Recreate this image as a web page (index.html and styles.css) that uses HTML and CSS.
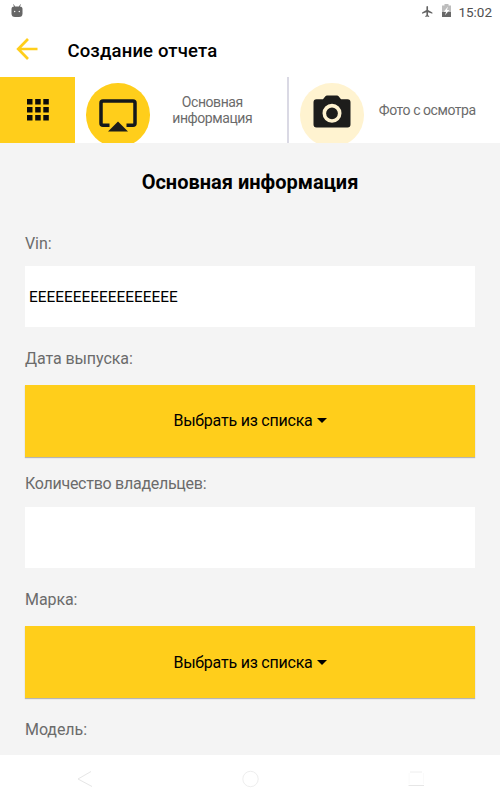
FILE: index.html
```html
<!DOCTYPE html>
<html lang="ru">
<head>
    <meta charset="UTF-8">
    <meta name="viewport" content="width=device-width, initial-scale=1.0">
    <title>Создание отчета</title>
    <link rel="stylesheet" href="styles.css">
</head>
<body>
    <!-- Status bar -->
    <div class="status-bar">
        <svg class="android-icon" width="12" height="14" viewBox="0 0 12 14">
            <path d="M2.5 0.5L3.8 3M9.5 0.5L8.2 3" stroke="#777" stroke-width="1"/>
            <path d="M0.5 5Q0.5 2.5 3 2.5H9Q11.5 2.5 11.5 5V9.5Q11.5 13 8 13H4Q.5 13 .5 9.500Z" fill="#666"/>
            <circle cx="3.7" cy="7.5" r=".7" fill="#fff"/>
            <circle cx="8.3" cy="7.5" r=".7" fill="#fff"/>
        </svg>
        <div class="status-right">
            <svg class="plane-icon" width="13" height="13" viewBox="0 0 24 24">
                <path d="M21 16v-2l-8-5V3.500C13 2.670 12.330 2 11.500 2S10 2.670 10 3.500V9l-8 5v2l8-2.500V19l-2 1.500V22l3.500-1 3.500 1v-1.500L13 19v-5.500l8 2.500z" fill="#636363"/>
            </svg>
            <svg class="battery-icon" width="9" height="14" viewBox="0 0 9 14">
                <path d="M2.5 0H6.5V1.5H9V8H0V1.5H2.5Z" fill="#bdbdbd"/>
                <path d="M0 8H9V13H0Z" fill="#686868"/>
                <path d="M6 2.500L1.800 7.800H4.100L3 11.200L7.400 5.900H5Z" fill="#fff"/>
            </svg>
            <span class="time">15:02</span>
        </div>
    </div>

    <header class="app-bar">
        <svg class="back-icon" width="22" height="22" viewBox="0 0 22 22">
            <path d="M21.500 11H2.500M12 1L2.200 11L12 21" fill="none" stroke="#ffce1b" stroke-width="2.700"/>
        </svg>
        <h1>Создание отчета</h1>
    </header>

    <!-- Report sections -->
    <nav class="tabs">
        <div class="menu-button">
            <svg width="22" height="22" viewBox="0 0 22 22">
                <path d="M0 0h5.500v5.500H0zM8.200 0h5.500v5.500H8.200zM16.300 0h5.500v5.500h-5.500zM0 8h5.500v5.500H0zM8.200 8h5.500v5.500H8.200zM16.300 8h5.500v5.500h-5.500zM0 16h5.500v5.500H0zM8.200 16h5.500v5.500H8.200zM16.300 16h5.500v5.500h-5.500z" fill="#0d0d0b"/>
            </svg>
        </div>
        <div class="tab tab-info">
            <div class="tab-icon">
                <svg width="38" height="34" viewBox="0 0 38 34">
                    <path d="M10.5 26.200H4Q2 26.200 2 24.200V4Q2 2 4 2H34Q36 2 36 4V24.200Q36 26.200 34 26.200H27.500" fill="none" stroke="#14191c" stroke-width="3.500"/>
                    <path d="M19 22.500L29 32.500H9Z" fill="#1d1d1b"/>
                </svg>
            </div>
            <span class="tab-title">Основная информация</span>
        </div>
        <div class="tab tab-photo">
            <div class="tab-icon">
                <svg width="38" height="34" viewBox="0 0 38 34">
                    <path d="M14 0.500H24Q25 .5 25.600 1.300L28 4.200H34.500Q37.500 4.200 37.500 7.200V29.500Q37.500 32.500 34.500 32.500H3.500Q.5 32.500 .5 29.500V7.200Q.5 4.200 3.500 4.200H10L12.400 1.300Q13 .5 14 .5Z" fill="#1d1d1b"/>
                    <circle cx="19" cy="18.300" r="7.700" fill="none" stroke="#fff3d0" stroke-width="3.600"/>
                </svg>
            </div>
            <span class="tab-title">Фото с осмотра</span>
        </div>
    </nav>

    <main class="content">
        <h2>Основная информация</h2>
        <form>
            <label class="first" for="vin">Vin:</label>
            <input type="text" id="vin" name="vin" value="EEEEEEEEEEEEEEEEE">
            <label>Дата выпуска:</label>
            <button type="button">Выбрать из списка <span class="caret"></span></button>
            <label class="short" for="owners">Количество владельцев:</label>
            <input type="text" id="owners" name="owners">
            <label>Марка:</label>
            <button type="button">Выбрать из списка <span class="caret"></span></button>
            <label>Модель:</label>
        </form>
    </main>

    <!-- System navigation -->
    <footer class="nav-bar">
        <svg width="18" height="18" viewBox="0 0 18 18">
            <path d="M15 1.500L2 9L16 16.500" fill="none" stroke="#e6e6e6"/>
        </svg>
        <svg width="18" height="18" viewBox="0 0 18 18">
            <circle cx="8.500" cy="9" r="7.700" fill="none" stroke="#eee"/>
        </svg>
        <svg width="18" height="18" viewBox="0 0 18 18">
            <path d="M3 2H15" stroke="#eee"/>
            <path d="M2 3V14M16.500 3V14" stroke="#fafafa"/>
            <path d="M1.500 15.500H17" stroke="#e6e6e6"/>
        </svg>
    </footer>
</body>
</html>
```

FILE: styles.css
```css
* {
    box-sizing: border-box;
}

body {
    font-family: Roboto, "Liberation Sans", sans-serif;
    margin: 0;
    height: 800px;
    display: flex;
    flex-direction: column;
    background-color: #ffffff;
    color: #000000;
    overflow: hidden;
}

.status-bar {
    height: 24px;
    flex: none;
    display: flex;
    justify-content: space-between;
    padding: 4px 8px 0 11px;
}

.status-right {
    display: flex;
}

.plane-icon {
    margin: 1px 8px 0 0;
}

.battery-icon {
    margin-right: 7px;
}

.time {
    font-size: 13.5px;
    line-height: 16px;
    color: #505050;
}

.app-bar {
    height: 53px;
    flex: none;
    display: flex;
    align-items: center;
    padding-left: 16px;
}

.back-icon {
    margin-bottom: 3px;
}

h1 {
    margin: 0 0 0 29.5px;
    padding-top: 1px;
    font-size: 18.5px;
    font-weight: 500;
    letter-spacing: 0.15px;
}

.tabs {
    height: 65.5px;
    flex: none;
    display: flex;
    overflow: hidden;
}

.menu-button {
    width: 75px;
    display: flex;
    align-items: center;
    justify-content: center;
    background-color: #ffce1b;
}

.tab {
    display: flex;
}

.tab-info {
    width: 214px;
    padding: 0 12px 0 11px;
    border-right: 2px solid #dad9e4;
}

.tab-photo {
    flex: 1;
    padding: 0 9px 0 11px;
}

.tab-icon {
    width: 63.5px;
    height: 63.5px;
    margin-top: 6px;
    flex: none;
    display: flex;
    align-items: center;
    justify-content: center;
    border-radius: 50%;
    background-color: #ffce1b;
}

.tab-photo .tab-icon {
    background-color: #fff3d0;
}

.tab-info svg {
    margin-top: 2px;
}

.tab-photo svg {
    margin-bottom: 5px;
}

.tab-title {
    flex: 1;
    align-self: center;
    text-align: center;
    font-size: 14px;
    line-height: 16px;
    letter-spacing: -0.44px;
    color: #6b6b6b;
}

.content {
    flex: 1;
    padding: 0 25px;
    background-color: #f4f4f4;
    overflow: hidden;
}

h2 {
    margin: 26px 0 0;
    font-size: 20px;
    line-height: 26px;
    font-weight: 700;
    text-align: center;
}

form {
    display: flex;
    flex-direction: column;
    padding-top: 13px;
}

label {
    height: 58px;
    padding-top: 5px;
    display: flex;
    align-items: center;
    font-size: 16px;
    letter-spacing: -0.08px;
    color: #6b6b6b;
}

label.first {
    padding-top: 13px;
}

label.short {
    height: 49.5px;
    padding-top: 4px;
    letter-spacing: -0.27px;
}

input {
    height: 61.3px;
    padding: 1px 4px 0;
    border: none;
    background-color: #ffffff;
    font-family: inherit;
    font-size: 15.4px;
    color: #000000;
}

button {
    height: 72.3px;
    padding: 0;
    display: flex;
    align-items: center;
    justify-content: center;
    border: none;
    background-color: #ffce1b;
    box-shadow: 0 1px 1px #b5b5b5;
    font-family: inherit;
    font-size: 16px;
    letter-spacing: -0.22px;
    color: #000000;
}

.caret {
    margin-left: 4px;
    border: 5px solid transparent;
    border-top-color: #000000;
    border-bottom: none;
}

.nav-bar {
    height: 45px;
    flex: none;
    display: flex;
    align-items: center;
    justify-content: space-between;
    padding: 3px 75px 0 76px;
}
```
